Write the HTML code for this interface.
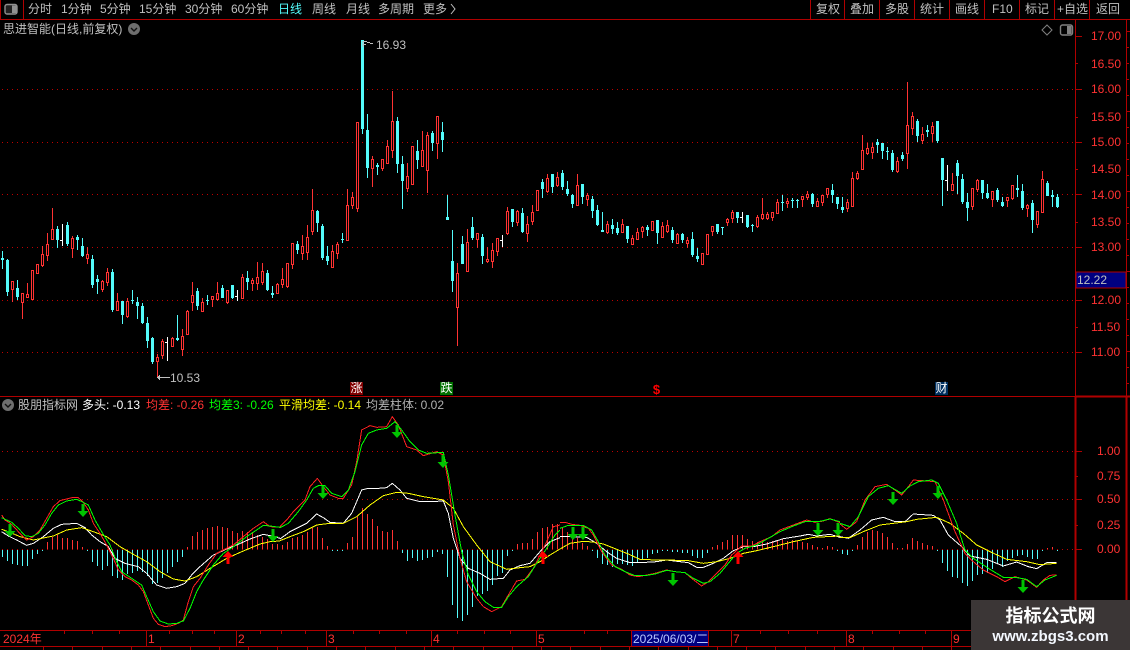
<!DOCTYPE html>
<html lang="zh"><head><meta charset="utf-8"><title>K</title>
<style>
html,body{margin:0;padding:0;background:#000;width:1130px;height:650px;overflow:hidden}
body{position:relative;font:12px/14px "Liberation Sans","WenQuanYi Zen Hei","Noto Sans CJK SC",sans-serif;color:#c0c0c0}
svg{position:absolute;left:0;top:0}
.t{position:absolute;white-space:nowrap;height:14px}
.r{color:#ff3232;left:1091px}
.c{color:#54fcfc}.w{color:#fff}.g{color:#00ff00}.y{color:#ffff00}.d{color:#ff3232}
.m{position:absolute;width:13px;height:13px;color:#fff;font-size:12px;line-height:13px;text-align:center}
#wm{position:absolute;left:971px;top:600px;width:159px;height:50px;background:#3b3636;color:#fff;text-align:center}
</style></head><body>
<svg width="1130" height="650" viewBox="0 0 1130 650" shape-rendering="crispEdges">
<g id="frame" fill="none" stroke="#b00000">
<path d="M0 19.5H1130M.5 0V19M23.5 0V19M810.5 0V19M844.5 0V19M879.5 0V19M914.5 0V19M949.5 0V19M984.5 0V19M1019.5 0V19M1054.5 0V19M1089.5 0V19"/>
<path d="M0 396.5H1130M0 630.5H1130M0 646.5H1130M1075.5 19V396M1126.5 19V396"/>
<path d="M1075.5 397V650M1126.5 397V631" stroke-width="2"/>
<path d="M1075.5 396.5H1130" stroke-width="2"/>
<path d="M1075 36.5h7M1075 63.5h3M1075 89.5h7M1075 117.5h3M1075 142.5h7M1075 169.5h3M1075 194.5h7M1075 222.5h3M1075 247.5h7M1075 300.5h7M1075 327.5h3M1075 352.5h7M1075 451.5h7M1075 476.5h3M1075 499.5h7M1075 525.5h3M1075 549.5h7"/>
<path d="M64.5 631v3M92.5 631v3M119.5 631v3M169.5 631v3M192.5 631v3M214.5 631v3M260.5 631v3M281.5 631v3M305.5 631v3M353.5 631v3M379.5 631v3M406.5 631v3M457.5 631v3M484.5 631v3M510.5 631v3M584.5 631v3M607.5 631v3M760.5 631v3M788.5 631v3M817.5 631v3M872.5 631v3M899.5 631v3M925.5 631v3"/>
<path d="M146.5 631v15M236.5 631v15M326.5 631v15M431.5 631v15M536.5 631v15M731.5 631v15M846.5 631v15M951.5 631v15"/>
</g>
<g fill="none" stroke="#c00000" stroke-dasharray="1 4">
<path d="M2 89.5H1075M2 142.5H1075M2 194.5H1075M2 247.5H1075M2 300.5H1075M2 352.5H1075M2 451.5H1075M2 499.5H1075M2 549.5H1075"/>
</g>
<g id="cd"></g>
<g id="bars"></g>
<g fill="none" stroke-width="3" stroke-linejoin="round" shape-rendering="crispEdges" id="lines"></g>
<g id="arr"></g>
<g fill="none" stroke="#c0c0c0" shape-rendering="crispEdges">
<path d="M157 377.5H170M158 376.5h2M158 378.5h2M159 375.5h1M159 379.5h1"/>
<path d="M363 41.5h4M367 42.5h3M370 43.5h3M363 44.5h3M363 41v6"/>
</g>
<g fill="none" stroke="#808080" shape-rendering="auto">
<path d="M1047 25l5 5-5 5-5-5z"/>
</g>
<g shape-rendering="auto">
<rect x="1060.5" y="25" width="12" height="10" rx="2" fill="#000" stroke="#808080" stroke-width="1.4"/>
<rect x="1067" y="26" width="4.5" height="8" fill="#808080"/>
<rect x="5" y="4.5" width="12" height="9.5" rx="2" fill="#222" stroke="#909090" stroke-width="1.4"/>
<rect x="12" y="5.5" width="4.5" height="7.5" fill="#909090"/>
<circle cx="134" cy="29" r="6" fill="#6e6e6e"/>
<path d="M131 28l3 3 3-3" fill="none" stroke="#111" stroke-width="1.4"/>
<circle cx="8" cy="405" r="6" fill="#6e6e6e"/>
<path d="M5 404l3 3 3-3" fill="none" stroke="#111" stroke-width="1.4"/>
<path d="M451 4l4 5-4 5" fill="none" stroke="#c0c0c0"/>
</g>
<rect x="1076" y="272" width="50" height="16" fill="#000080" stroke="#b00000"/>
</svg>

<span class="t" style="left:28px;top:2px">分时</span>
<span class="t" style="left:61px;top:2px">1分钟</span>
<span class="t" style="left:100px;top:2px">5分钟</span>
<span class="t" style="left:139px;top:2px">15分钟</span>
<span class="t" style="left:185px;top:2px">30分钟</span>
<span class="t" style="left:231px;top:2px">60分钟</span>
<span class="t c" style="left:278px;top:2px">日线</span>
<span class="t" style="left:312px;top:2px">周线</span>
<span class="t" style="left:346px;top:2px">月线</span>
<span class="t" style="left:378px;top:2px">多周期</span>
<span class="t" style="left:423px;top:2px">更多</span>
<span class="t" style="left:816px;top:2px">复权</span>
<span class="t" style="left:850px;top:2px">叠加</span>
<span class="t" style="left:885px;top:2px">多股</span>
<span class="t" style="left:920px;top:2px">统计</span>
<span class="t" style="left:955px;top:2px">画线</span>
<span class="t" style="left:992px;top:2px">F10</span>
<span class="t" style="left:1025px;top:2px">标记</span>
<span class="t" style="left:1057px;top:2px">+自选</span>
<span class="t" style="left:1096px;top:2px">返回</span>
<span class="t" style="left:3px;top:22px">思进智能(日线,前复权)</span>
<span class="t" style="left:376px;top:38px">16.93</span>
<span class="t" style="left:170px;top:371px">10.53</span>

<span class="t r" style="top:29px">17.00</span>
<span class="t r" style="top:57px">16.50</span>
<span class="t r" style="top:82px">16.00</span>
<span class="t r" style="top:110px">15.50</span>
<span class="t r" style="top:135px">15.00</span>
<span class="t r" style="top:162px">14.50</span>
<span class="t r" style="top:188px">14.00</span>
<span class="t r" style="top:215px">13.50</span>
<span class="t r" style="top:240px">13.00</span>
<span class="t" style="left:1077px;top:273px">12.22</span>
<span class="t r" style="top:293px">12.00</span>
<span class="t r" style="top:320px">11.50</span>
<span class="t r" style="top:345px">11.00</span>
<span class="t r" style="top:444px;left:1097px">1.00</span>
<span class="t r" style="top:469px;left:1097px">0.75</span>
<span class="t r" style="top:492px;left:1097px">0.50</span>
<span class="t r" style="top:518px;left:1097px">0.25</span>
<span class="t r" style="top:542px;left:1097px">0.00</span>

<div class="m" style="left:350px;top:382px;background:#800000">涨</div>
<div class="m" style="left:440px;top:382px;background:#007000">跌</div>
<div class="m" style="left:650px;top:383px;color:#f00;font-weight:bold;font-size:13px">$</div>
<div class="m" style="left:935px;top:382px;background:#003060">财</div>

<span class="t" style="left:18px;top:398px">股朋指标网</span>
<span class="t w" style="left:82px;top:398px">多头: -0.13</span>
<span class="t d" style="left:146px;top:398px;color:#f33">均差: -0.26</span>
<span class="t g" style="left:209px;top:398px">均差3: -0.26</span>
<span class="t y" style="left:279px;top:398px">平滑均差: -0.14</span>
<span class="t" style="left:366px;top:398px;color:#b0b0b0">均差柱体: 0.02</span>

<span class="t d" style="left:3px;top:632px">2024年</span>
<span class="t d" style="left:148px;top:632px">1</span>
<span class="t d" style="left:238px;top:632px">2</span>
<span class="t d" style="left:328px;top:632px">3</span>
<span class="t d" style="left:433px;top:632px">4</span>
<span class="t d" style="left:538px;top:632px">5</span>
<span class="t d" style="left:733px;top:632px">7</span>
<span class="t d" style="left:848px;top:632px">8</span>
<span class="t d" style="left:953px;top:632px">9</span>
<div style="position:absolute;left:631px;top:631px;width:78px;height:15px;background:#000080;border-left:1px solid #b00000;border-right:1px solid #b00000;box-sizing:border-box"></div>
<span class="t" style="left:633px;top:632px;color:#b8c8ff;">2025/06/03/二</span>

<div id="wm"><div style="font-size:18px;line-height:22px;font-weight:bold;margin-top:4px;font-family:'Noto Sans CJK SC',sans-serif">指标公式网</div><div style="font-size:15px;line-height:21px;font-weight:bold;margin-top:0;color:#f4f8ff">www.zbgs3.com</div></div>

<script>
var RED='#ff3232',CY='#54fcfc';
var segs=[[130,0,"c363,384,389,417 c388,390,486,497 r453,453,477,515 c450,474,501,510 r489,489,516,567 r459,492,500,503 r420,420,506,507 r402,403,429,429 r348,372,405,410 r309,342,375,393 r234,297,327,327 c288,297,330,354 w282,331,331,348 c276,285,342,348 r318,324,354,384 c315,321,330,360 c324,348,378,381 r351,372,384,402 c375,387,465,474 c435,447,456,492 r450,453,477,486 r414,426,456,468 c417,426,540,546 r489,513,540,543 c513,513,555,582 r504,513,558,564 c480,510,513,522 c501,516,528,567 c519,528,579,582 c561,579,633,654 c621,624,696,702 r672,681,693,745 r627,633,675,687 w621,636,636,693 r621,624,648,651 c555,624,630,633 r597,618,657,678 r540,543,612,612 r456,495,516,543 c474,483,528,540 r504,516,543,543 c495,510,513,526 r498,499,507,531 r456,489,507,513 c465,474,504,504 r480,480,516,522 c465,465,504,507 w480,498,498,513 r432,441,504,504 c423,444,456,480 r444,450,459,483 r396,441,459,480 r399,423,456,465 c420,429,480,483"],
[30,54,"c768,789,795,804 r759,762,789,789 r714,747,762,774 r699,699,768,774 r639,639,702,717 c633,642,660,672 r615,648,669,690 r585,621,666,690 r477,540,603,615 c540,543,579,606 c582,588,684,690 c648,678,693,705 r645,663,711,711 r636,642,669,687 c609,627,630,639 r477,525,630,630 r486,501,525,537 r276,276,534,546 c30,30,297,312 c252,300,414,444 r378,387,414,471 c399,405,411,435 r387,387,414,423 r330,348,399,402 r183,273,360,384 c261,273,402,429 c378,402,453,537 r399,438,474,486 r348,348,462,462 c330,363,390,417 r303,360,408,408 r306,315,420,489 c303,309,339,363 r258,258,339,387 c276,306,330,366 c495,561,570,570 c600,693,753,786 r699,729,831,948 c618,642,702,702 r597,636,723,723 c561,591,624,630 r609,609,627,654 c612,621,678,702 r651,687,693,699 r639,660,693,714 r624,624,663,678 w615,630,630,651 r531,543,609,615 c537,537,576,591 r540,543,576,588 c534,549,606,609 r558,582,609,636 r525,546,573,585 r480,480,540,543"],
[140,108,"c117,126,147,174 r102,114,153,159 c102,102,141,159 r96,111,135,141 c90,99,141,150 c123,147,162,168 c162,165,192,204 r102,135,195,195 c132,132,171,192 r159,165,177,198 c168,177,213,234 c195,210,255,258 c216,270,276,276 r243,252,276,282 c237,255,267,282 c246,264,279,285 r237,252,276,279 c258,258,297,309 r285,294,312,312 r264,276,297,297 r258,261,273,294 c255,261,270,288 r243,243,270,270 c240,240,279,312 r246,258,291,291 r240,255,273,279 c261,270,300,309 r279,282,309,312 c279,282,300,309 r291,300,309,324 c276,297,345,351 c324,348,357,366 r339,339,372,375 r282,282,342,342 r258,258,273,288 c252,252,276,282 c261,261,264,285 r234,237,246,258 r210,216,234,249 c216,216,234,249 w216,231,231,249 c225,225,261,264 c252,255,258,276 r225,231,258,264 r174,222,234,240 r216,222,234,240 r216,216,231,243 r177,186,219,222 c165,186,189,213 r174,183,189,204 c174,180,183,204 c177,180,183,204"],
[80,160,"r348,348,357,381 r333,342,351,360 c339,342,372,381 r354,363,378,378 r345,345,366,378 r324,324,342,354 c312,330,345,369 c351,351,372,387 c351,381,390,399 r357,366,384,396 r276,294,378,381 r273,279,294,300 r165,210,267,270 r189,204,219,225 r189,201,216,237 c177,186,195,219 c189,189,213,237 c201,213,216,240 c210,219,270,276 r231,243,273,279 c216,225,237,243 r6,135,219,267 r96,108,144,165 c117,123,168,186 r141,162,180,192 c135,150,156,171 r126,138,159,186 c123,123,183,189 c234,234,300,378 w255,300,300,333 r279,312,330,330 c240,249,288,342 c282,297,366,372 c339,366,384,423 r324,324,378,390 r297,300,327,336 c300,300,339,357 c312,339,354,357 r333,333,357,381 c324,330,360,366 c351,366,378,381 r351,351,360,381 r315,315,354,360 c285,324,330,351 c312,333,384,390 r372,375,384,411 c360,369,420,459 r393,393,432,444 r273,297,396,396 c303,309,348,348 c330,345,351,381 c342,351,381,384"]];
var h='';
segs.forEach(function(s){var oy=s[0],i=s[1];s[2].split(' ').forEach(function(e){
 var k=e[0],v=e.slice(1).split(',').map(Number),px=2+5*i;i++;
 var a=Math.round(oy+v[0]/3),b=Math.round(oy+v[1]/3),c=Math.round(oy+v[2]/3),d=Math.round(oy+v[3]/3);
 if(k=='w'){h+='<rect x="'+px+'" y="'+a+'" width="1" height="'+(d-a)+'" fill="#fff"/><rect x="'+(px-2)+'" y="'+b+'" width="2" height="1" fill="#fff"/>';return}
 var col=k=='r'?RED:CY;
 h+='<rect x="'+px+'" y="'+a+'" width="1" height="'+Math.max(d-a,1)+'" fill="'+col+'"/>';
 var hh=Math.max(c-b,1);
 if(k=='r'){h+='<rect x="'+(px-1)+'" y="'+b+'" width="3" height="'+(hh+1)+'" fill="'+col+'"/>';
  if(hh>1)h+='<rect x="'+px+'" y="'+(b+1)+'" width="1" height="'+(hh-1)+'" fill="#000"/>';}
 else h+='<rect x="'+(px-1)+'" y="'+b+'" width="3" height="'+hh+'" fill="'+col+'"/>';
})});
document.getElementById('cd').innerHTML=h;

var barsets=[[395,0,[483,495,505,508,510,510,488,474,461,440,425,420,430,430,435,438,455,461,497,510,522,510,540,545,552,535,530,525,527,540,565,562,545,530,512,497,482,457,423,410,405,399,396,393,397,400,407,415,408,410,412,420,425,432,446,448]],
[395,56,[450,440,430,425,420,412,400,395,428,452,461,465,465,443,425,365,340,357,372,392,408,410,405,437,470,495,486,495,492,485,483,469,475,543,627,665,675,657,632,600,595,585,567,540,530,480,465,446,445,443,432,410,400,395,388,387]],
[480,112,[145,155,165,175,190,197,208,232,248,252,258,250,250,252,255,245,238,230,218,216,210,207,214,213,216,216,225,232,232,216,202,195,185,180,165,165,165,178,183,185,183,185,182,180,178,182,180,182,187,190,195,202,203,198,200,207]],
[470,168,[250,252,236,225,200,187,180,183,190,200,220,233,235,222,204,213,220,225,228,240,275,300,318,320,337,345,330,312,310,305,293,280,288,270,262,255,252,258,265,264,240,234,231,236]]];
h='';
barsets.forEach(function(s){var oy=s[0];s[2].forEach(function(z,j){
 var px=2+5*(s[1]+j),y=Math.round(oy+z/3),zero=549;
 if(y>=zero)h+='<rect x="'+px+'" y="550" width="1" height="'+Math.max(y-549,1)+'" fill="'+CY+'"/>';
 else h+='<rect x="'+px+'" y="'+y+'" width="1" height="'+(549-y)+'" fill="'+RED+'"/>';
})});
document.getElementById('bars').innerHTML=h;

var L={
 w:[[0,395,"5,410 25,423 50,435 80,451 100,445 130,425 160,400 185,388 230,385 255,398 275,420 300,440 325,455 345,490 375,505 415,515 440,535 470,570 500,580 530,575 555,565 575,540 600,515 640,480 680,462 710,450 750,432 790,418 810,422 840,430"],
 [280,395,"0,432 30,410 80,385 110,357 130,368 150,382 190,385 215,355 230,320 245,285 265,280 295,280 320,278 337,265 360,285 380,310 420,320 450,320 490,318 505,355 520,430 540,490 565,520 600,535 630,553 670,550 690,525 720,512 750,505 780,470 810,440 840,428"],
 [560,480,"0,170 30,170 80,172 110,190 140,215 170,235 210,248 240,248 290,245 320,240 360,245 385,248 410,262 430,262 460,250 490,235 520,212 550,200 580,200 620,192 670,176 720,168 745,163 770,168 810,163 840,172"],
 [840,470,"0,200 25,205 60,180 95,150 130,142 165,155 195,155 220,132 280,136 300,150 325,195 365,230 390,258 440,268 490,288 530,276 565,290 590,296 620,278 650,278"]],
 y:[[0,395,"5,403 30,412 60,425 100,435 160,423 200,405 245,398 280,410 320,425 360,455 400,478 440,500 480,530 520,552 555,558 590,545 630,520 680,490 730,468 780,447 810,440 840,438"],
 [280,395,"0,437 30,425 70,410 110,390 150,385 190,385 230,365 270,330 310,302 350,292 385,295 430,305 490,315 520,340 550,395 590,450 630,500 680,523 720,518 750,515 780,500 810,480 840,462"],
 [560,480,"0,207 30,190 70,184 100,186 130,192 170,208 205,222 240,238 290,240 320,240 385,242 430,250 470,245 510,235 550,220 590,212 640,200 700,185 760,172 840,168"],
 [840,470,"0,203 30,203 70,185 120,165 200,155 230,148 290,142 330,160 370,190 410,225 450,245 500,268 560,275 600,284 650,280"]],
 r:[[0,395,"5,360 15,375 35,388 55,410 80,435 100,425 120,405 140,370 160,335 180,317 200,312 220,307 235,308 250,322 265,345 280,385 300,415 320,450 340,490 355,525 375,545 395,555 415,570 430,590 445,630 460,670 475,688 495,695 515,692 535,685 550,675 565,620 580,575 600,550 625,510 650,475 680,460 700,450 730,425 760,400 790,380 810,395 840,397"],
 [280,395,"0,395 20,375 40,350 75,315 90,275 112,250 130,275 150,300 175,310 190,310 215,270 230,200 245,105 270,92 290,97 320,95 337,65 355,90 380,155 410,165 430,182 470,170 490,180 505,260 520,390 540,490 560,560 590,610 610,635 635,650 665,635 685,600 710,558 735,553 760,520 780,480 800,440 820,395 840,390"],
 [560,480,"0,128 15,127 35,133 60,136 85,145 100,165 125,215 155,255 185,268 210,285 235,290 260,285 285,280 320,270 345,275 375,278 395,295 425,318 445,305 470,280 495,255 515,225 545,198 575,198 600,185 635,170 660,150 700,135 740,120 765,127 790,123 810,116 840,128"],
 [840,470,"0,162 20,178 50,155 75,90 105,50 140,43 165,60 185,75 205,50 220,30 260,33 285,35 310,90 345,185 375,250 400,275 430,300 470,320 495,335 525,320 560,330 590,352 610,330 630,316 650,315"]],
 g:[[0,395,"5,368 35,382 55,400 75,422 95,425 115,415 135,390 155,355 175,330 200,318 230,313 250,322 265,330 285,375 305,410 330,450 350,500 365,530 395,550 425,570 440,605 460,650 480,678 505,687 530,685 550,678 570,640 590,590 610,555 640,510 670,475 700,455 740,425 770,405 790,391 810,393 840,397"],
 [280,395,"0,398 25,385 55,350 80,315 100,280 115,272 135,272 155,295 185,305 205,285 225,230 245,150 265,115 290,105 320,100 345,80 365,105 390,140 415,165 440,175 490,172 505,240 525,360 545,470 565,540 590,590 615,620 640,637 665,637 685,605 710,575 745,545 770,505 800,460 825,420 840,405"],
 [560,480,"0,145 25,136 70,136 95,150 115,185 135,225 165,260 195,275 225,287 255,287 285,282 320,271 345,275 375,278 400,295 430,310 450,305 480,280 505,250 530,220 555,205 590,195 625,175 660,155 700,138 735,125 775,125 810,117 840,125"],
 [840,470,"0,160 30,170 55,140 85,80 115,55 145,47 185,70 210,48 235,35 275,30 295,40 320,90 350,160 375,240 400,265 445,295 490,322 525,322 560,328 590,350 615,330 650,316"]]};
var cols={w:'#ffffff',y:'#ffff00',r:'#ff2020',g:'#00ff00'};h='';
['w','y','r','g'].forEach(function(k){L[k].forEach(function(s){
 h+='<polyline transform="translate('+s[0]+','+s[1]+') scale(.33333)" stroke="'+cols[k]+'" points="'+s[2]+'"/>';
})});
document.getElementById('lines').innerHTML=h;

var G=[[10,537],[83,517],[273,542],[323,499],[397,438],[443,468],[573,540],[583,540],[673,586],[818,536],[838,536],[893,505],[938,499],[1023,593]];
var R=[[228,551],[543,551],[738,551]];h='';
G.forEach(function(p){var x=p[0],y=p[1];h+='<path fill="#00c400" shape-rendering="auto" d="M'+(x-1.5)+' '+(y-13)+'h3v7h4L'+x+' '+y+'L'+(x-5.5)+' '+(y-6)+'H'+(x-1.5)+'z"/>'});
R.forEach(function(p){var x=p[0],y=p[1];h+='<path fill="#ff0000" shape-rendering="auto" d="M'+(x-1.5)+' '+(y+13)+'h3v-7h4L'+x+' '+y+'L'+(x-5.5)+' '+(y+6)+'H'+(x-1.5)+'z"/>'});
var t='';
for(var y=31;y<396;y+=16)t+='<rect x="1127" y="'+y+'" width="'+(((y-31)%80==0)?3:2)+'" height="1" fill="#b00000"/>';
for(var x=43;x<1075;x+=29.3)t+='<rect x="'+Math.round(x)+'" y="647" width="1" height="3" fill="#b00000"/>';
document.getElementById('arr').innerHTML=h+t;
</script>
</body></html>
